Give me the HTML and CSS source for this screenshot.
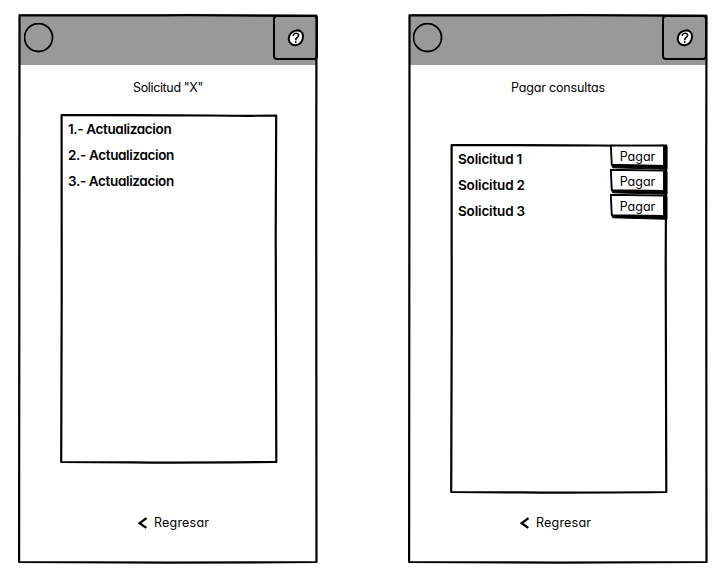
FILE: index.html
```
<!DOCTYPE html>
<html lang="es">
<head>
<meta charset="utf-8">
<title>Solicitudes</title>
<link rel="stylesheet" href="styles.css">
</head>
<body>
<main class="board">
  <section class="phone">
    <header class="bar">
      <svg class="avatar" viewBox="0 0 30 30"><circle cx="14.5" cy="14.500" r="14"/></svg>
      <button class="help" aria-label="Ayuda">
        <svg class="help-icon" viewBox="0 0 18 18"><path class="disc" d="M8.200 1.800C12.500 .3 16.300 3.200 16 7.400C16 12 13.200 15.900 9 16.300C4.700 16.700 1.500 13.600 1.800 9.500C2 6 4.200 3 8.200 1.800Z"/><path class="mark" d="M6.300 6.200C7.200 3.400 11.900 3.700 11.600 6.500C11.400 8.500 8.900 8.300 8.800 10.600M8.700 12.700V13.500"/></svg>
      </button>
    </header>
    <h1 class="title title-request">Solicitud "X"</h1>
    <div class="list">
      <svg class="outline" viewBox="0 0 218 350"><path d="M1.600 1.100Q110 1 150 1.500T216.200 1.600L215.700 120L216.300 348Q120 348.900 72 348.400L1.200 348L1.700 180Z"/></svg>
      <ul class="rows">
        <li class="row update">1.- Actualizacion</li>
        <li class="row update">2.- Actualizacion</li>
        <li class="row update">3.- Actualizacion</li>
      </ul>
    </div>
    <a class="back"><svg class="chevron" viewBox="0 0 10 12"><path d="M8.500 1.100L1.700 6.200L8.300 10.900"/></svg><span>Regresar</span></a>
    <svg class="outline" viewBox="0 0 300 550"><path d="M1.500 1.300Q80 1.700 170 1.100L298.500 2L298.200 180L298.500 548L150 548.700L1.100 548L1.300 280Z"/></svg>
  </section>
  <section class="phone phone-pay">
    <header class="bar">
      <svg class="avatar" viewBox="0 0 30 30"><circle cx="14.5" cy="14.500" r="14"/></svg>
      <button class="help" aria-label="Ayuda">
        <svg class="help-icon" viewBox="0 0 18 18"><path class="disc" d="M8.200 1.800C12.500 .3 16.300 3.200 16 7.400C16 12 13.200 15.900 9 16.300C4.700 16.700 1.500 13.600 1.800 9.500C2 6 4.200 3 8.200 1.800Z"/><path class="mark" d="M6.300 6.200C7.200 3.400 11.900 3.700 11.600 6.500C11.400 8.500 8.900 8.300 8.800 10.600M8.700 12.700V13.500"/></svg>
      </button>
    </header>
    <h1 class="title">Pagar consultas</h1>
    <div class="list">
      <svg class="outline" viewBox="0 0 218 350"><path d="M1.600 1.100Q110 1 150 1.500T216.200 1.600L215.700 120L216.300 348Q120 348.900 72 348.400L1.200 348L1.700 180Z"/></svg>
      <ul class="rows">
        <li class="row">Solicitud 1</li>
        <li class="row">Solicitud 2</li>
        <li class="row">Solicitud 3</li>
      </ul>
      <div class="actions">
        <button class="pay"><svg class="pay-shape" viewBox="0 0 58 26"><path class="shade" d="M2 21L54 23L53 1L57 2.500V25.300L3 23.800Z"/><path class="face" d="M.8 1.600H54V22L1.800 20.700Z"/></svg><span>Pagar</span></button>
        <button class="pay"><svg class="pay-shape" viewBox="0 0 58 26"><path class="shade" d="M2 21L54 23L53 1L57 2.500V25.300L3 23.800Z"/><path class="face" d="M.8 .8L54 1.600V22L1.800 21.200Z"/></svg><span>Pagar</span></button>
        <button class="pay"><svg class="pay-shape" viewBox="0 0 58 26"><path class="shade" d="M2 21L54 23L53 1L57 2.500V25.300L3 23.800Z"/><path class="face" d="M.8 .8L54 1.600V22L1.800 21.200Z"/></svg><span>Pagar</span></button>
      </div>
    </div>
    <a class="back"><svg class="chevron" viewBox="0 0 10 12"><path d="M8.500 1.100L1.700 6.200L8.300 10.900"/></svg><span>Regresar</span></a>
    <svg class="outline" viewBox="0 0 300 550"><path d="M1.500 1.300Q80 1.700 170 1.100L298.500 2L298.200 180L298.500 548L150 548.700L1.100 548L1.300 280Z"/></svg>
  </section>
</main>
</body>
</html>
```
FILE: styles.css
```
* { box-sizing: border-box; }
body {
  margin: 0;
  background: #fff;
  color: #000;
  font: 12.5px/16px Inter, "Liberation Sans", sans-serif;
  font-feature-settings: "cv11";
  overflow: hidden;
}
svg { display: block; fill: none; stroke: #000; stroke-linecap: round; stroke-linejoin: round; }
button { margin: 0; padding: 0; border: 0; background: none; color: inherit; font: inherit; font-feature-settings: inherit; }
.board { display: flex; gap: 90px; padding: 14px 0 0 18px; }
.phone { position: relative; display: flex; flex-direction: column; width: 300px; height: 550px; flex: none; }
.outline { position: absolute; inset: 0; width: 100%; height: 100%; stroke-width: 2.2; pointer-events: none; }
.bar { display: flex; justify-content: space-between; height: 51px; flex: none; margin: 0 1px; padding: 1px 0 0 5px; background: #999; }
.phone-pay .bar { padding-left: 4px; }
.avatar { width: 30px; height: 30px; margin-top: 8px; stroke-width: 1.8; }
.help { display: flex; align-items: center; justify-content: center; width: 45px; height: 45px; border: 2px solid #000; border-radius: 4px; margin-right: -1px; }
.phone-pay .help { margin-right: 0; }
.help-icon { width: 18px; height: 18px; }
.disc { fill: #fff; stroke-width: 2; }
.mark { stroke-width: 1.6; }
.title { margin: 15px 0 0; font-size: 12.5px; line-height: 16px; font-weight: 400; letter-spacing: -0.18px; text-align: center; }
.title-request { letter-spacing: -0.35px; }
.list { position: relative; display: flex; justify-content: space-between; width: 218px; height: 350px; margin: 18px 0 0 42px; }
.phone-pay .list { margin-top: 48px; }
.rows { list-style: none; margin: 0; padding: 2px 0 0 8px; }
.row { height: 26px; font-size: 13.5px; line-height: 26px; font-weight: 600; letter-spacing: -0.17px; white-space: nowrap; }
.update { letter-spacing: -0.36px; }
.pay { position: relative; display: block; width: 58px; height: 25px; }
.pay span { position: relative; display: block; padding-right: 3px; line-height: 25px; }
.pay-shape { position: absolute; left: 0; top: 0; width: 58px; height: 26px; stroke-width: 1.9; }
.shade { fill: #000; stroke-width: 1; }
.face { fill: #fff; }
.back { display: flex; align-items: center; gap: 6px; margin: 51px 0 0 120px; font-size: 12.5px; letter-spacing: 0.2px; }
.phone-pay .back { margin: 21px 0 0 112px; }
.chevron { width: 10px; height: 12px; stroke-width: 2.3; stroke-linecap: butt; stroke-linejoin: miter; }
```
